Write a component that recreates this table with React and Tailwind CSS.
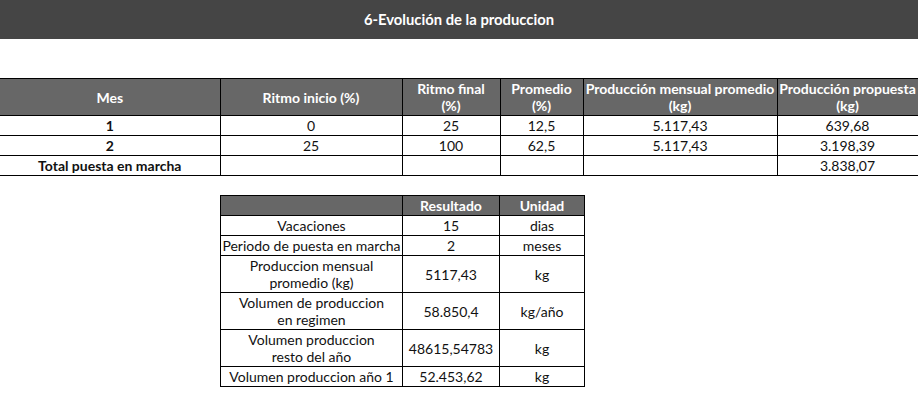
import React from 'react';

const font = { fontFamily: 'Lato, "Open Sans", sans-serif' };

const rows = [
  { mes: '1', inicio: '0', final: '25', prom: '12,5', mensual: '5.117,43', propuesta: '639,68' },
  { mes: '2', inicio: '25', final: '100', prom: '62,5', mensual: '5.117,43', propuesta: '3.198,39' },
];

const resumen = [
  { label: ['Vacaciones'], valor: '15', unidad: 'dias' },
  { label: ['Periodo de puesta en marcha'], valor: '2', unidad: 'meses' },
  { label: ['Produccion mensual', 'promedio (kg)'], valor: '5117,43', unidad: 'kg' },
  { label: ['Volumen de produccion', 'en regimen'], valor: '58.850,4', unidad: 'kg/año' },
  { label: ['Volumen produccion', 'resto del año'], valor: '48615,54783', unidad: 'kg' },
  { label: ['Volumen produccion año 1'], valor: '52.453,62', unidad: 'kg' },
];

const th = 'border border-black bg-[#676767] text-white font-bold text-center align-middle leading-[17px] p-0';
const td = 'border border-black text-center align-middle leading-[17px] p-0 h-[20px]';

export default function App() {
  return (
    <div className="w-[918px] h-[405px] bg-white text-[#111] text-[14px]" style={font}>
      {/* Title bar */}
      <div className="h-[39px] bg-[#454545] flex items-center justify-center">
        <h1 className="text-white font-bold text-[14.8px] -mt-[1px]">6-Evolución de la produccion</h1>
      </div>

      {/* Main table */}
      <table className="mt-[39px] border-collapse table-fixed w-[918px]">
        <colgroup>
          <col className="w-[220px]" />
          <col className="w-[182px]" />
          <col className="w-[98px]" />
          <col className="w-[83px]" />
          <col className="w-[194px]" />
          <col className="w-[141px]" />
        </colgroup>
        <thead>
          <tr className="h-[37px]">
            <th className={th + ' border-l-0'}>Mes</th>
            <th className={th}>Ritmo inicio (%)</th>
            <th className={th}>Ritmo final<br />(%)</th>
            <th className={th}>Promedio<br />(%)</th>
            <th className={th}>Producción mensual promedio<br />(kg)</th>
            <th className={th + ' whitespace-nowrap'}>Producción propuesta<br />(kg)</th>
          </tr>
        </thead>
        <tbody>
          {rows.map((r) => (
            <tr key={r.mes}>
              <td className={td + ' border-l-0 font-bold'}>{r.mes}</td>
              <td className={td}>{r.inicio}</td>
              <td className={td}>{r.final}</td>
              <td className={td}>{r.prom}</td>
              <td className={td}>{r.mensual}</td>
              <td className={td}>{r.propuesta}</td>
            </tr>
          ))}
          <tr>
            <td className={td + ' border-l-0 font-bold'}>Total puesta en marcha</td>
            <td className={td}></td>
            <td className={td}></td>
            <td className={td}></td>
            <td className={td}></td>
            <td className={td}>3.838,07</td>
          </tr>
        </tbody>
      </table>

      {/* Summary table */}
      <table className="mt-[19px] ml-[220px] border-collapse table-fixed w-[364px]">
        <colgroup>
          <col className="w-[182px]" />
          <col className="w-[97px]" />
          <col className="w-[85px]" />
        </colgroup>
        <thead>
          <tr className="h-[20px]">
            <th className={th}></th>
            <th className={th}>Resultado</th>
            <th className={th}>Unidad</th>
          </tr>
        </thead>
        <tbody>
          {resumen.map((r) => (
            <tr key={r.label.join(' ')} className={r.label.length > 1 ? 'h-[37px]' : 'h-[20px]'}>
              <td className={td + ' whitespace-nowrap'}>
                {r.label.map((l, i) => (
                  <div key={i}>{l}</div>
                ))}
              </td>
              <td className={td}>{r.valor}</td>
              <td className={td}>{r.unidad}</td>
            </tr>
          ))}
        </tbody>
      </table>
    </div>
  );
}
